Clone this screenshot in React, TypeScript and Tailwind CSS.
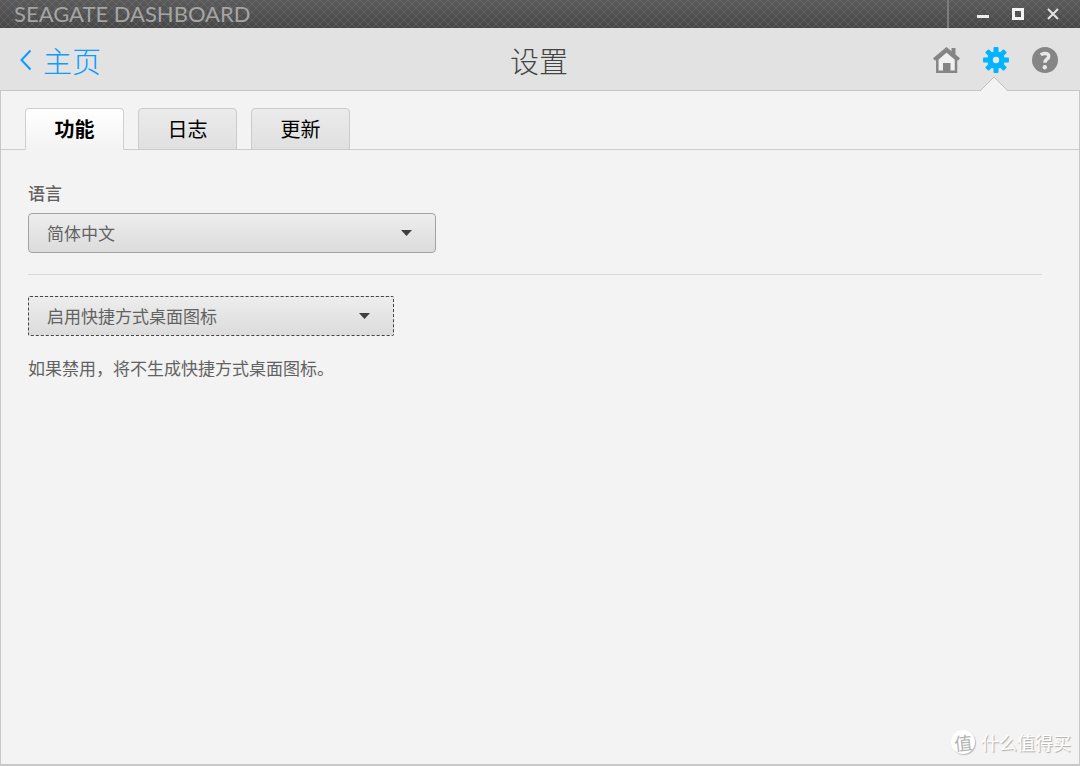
import React, { useState } from "react";

const tabs = ["功能", "日志", "更新"];

const HomeIcon = () => (
  <svg width="27" height="26" viewBox="0 0 27 26" aria-hidden="true">
    <path d="M18.500 1h4v8h-4z" fill="#858585" />
    <path
      d="M4.300 12v12.700h18.700V12L13.500 4z"
      fill="#f0f0f0"
      stroke="#858585"
      strokeWidth="2.500"
    />
    <path d="M10 16h7.500v9H10z" fill="#858585" />
    <path
      d="M1 12.500L13.500 2 26 12.500"
      fill="none"
      stroke="#858585"
      strokeWidth="3"
    />
  </svg>
);

const GearIcon = () => (
  <svg width="26" height="26" viewBox="0 0 26 26" aria-hidden="true">
    <g fill="#00b4ff">
      {[0, 45, 90, 135].map((angle) => (
        <rect
          key={angle}
          x="10.500"
          y="0"
          width="5"
          height="26"
          rx="1"
          transform={`rotate(${angle} 13 13)`}
        />
      ))}
      <circle cx="13" cy="13" r="8.800" />
    </g>
    <circle cx="13" cy="13" r="3.200" fill="#e8e8e8" />
  </svg>
);

const HelpIcon = () => (
  <svg width="26" height="26" viewBox="0 0 26 26" aria-hidden="true">
    <circle cx="13" cy="13" r="13" fill="#858585" />
    <path
      d="M8.800 7.800c2.600-2 7.900-1.800 7.900 1.600 0 2.800-3.900 2.800-3.900 6.300"
      fill="none"
      stroke="#e8e8e8"
      strokeWidth="3.500"
    />
    <circle cx="12.800" cy="20.300" r="2.200" fill="#e8e8e8" />
  </svg>
);

const TitleBar = () => (
  <div className="flex h-7 items-stretch justify-between bg-[linear-gradient(45deg,transparent_44%,#ffffff18_44%,#ffffff18_56%,transparent_56%),linear-gradient(-45deg,transparent_44%,#ffffff18_44%,#ffffff18_56%,transparent_56%),linear-gradient(#5a5a5a,#474747)] bg-[size:8px_8px,8px_8px,100%_100%] pl-3.5">
    <span className="font-[Lato,sans-serif] text-[22px] leading-7 text-[#a5a5a5]">
      SEAGATE DASHBOARD
    </span>
    <div className="flex items-center gap-[23px] border-l-2 border-[#7c7c7c] pr-[21px] pl-7">
      <button type="button" aria-label="最小化">
        <svg width="12" height="12" viewBox="0 0 12 12">
          <path d="M0 7h12v3H0z" fill="#ededed" />
        </svg>
      </button>
      <button type="button" aria-label="最大化">
        <svg width="12" height="12" viewBox="0 0 12 12">
          <path
            d="M1.500 1.500h9v9h-9z"
            fill="none"
            stroke="#f3f3f3"
            strokeWidth="3"
          />
        </svg>
      </button>
      <button type="button" aria-label="关闭">
        <svg width="12" height="12" viewBox="0 0 12 12">
          <path d="M1 1l10 10M11 1L1 11" stroke="#e4e4e4" strokeWidth="2" />
        </svg>
      </button>
    </div>
  </div>
);

const Header = () => (
  <header className="grid h-[63px] grid-cols-[1fr_auto_1fr] items-center border-b border-[#c6c6c6] bg-[#e2e2e2] pt-0.5 pr-[22px] pl-5">
    <a
      href="#home"
      className="flex items-center gap-3 justify-self-start text-[29px] leading-8 font-light text-[#0c9bff]"
    >
      <svg width="11" height="22" viewBox="0 0 11 22" aria-hidden="true">
        <path
          d="M10.500 1.500L1.500 11l9 9.500"
          fill="none"
          stroke="#0c9bff"
          strokeWidth="2"
        />
      </svg>
      主页
    </a>
    <h1 className="text-[29px] leading-8 font-light text-[#444]">设置</h1>
    <nav className="flex items-center gap-[23px] justify-self-end">
      <a href="#home" aria-label="主页">
        <HomeIcon />
      </a>
      <a href="#settings" aria-label="设置" className="relative">
        <GearIcon />
        <svg
          className="absolute top-[29px] -left-1"
          width="30"
          height="16"
          viewBox="0 0 30 16"
          aria-hidden="true"
        >
          <path d="M0 16L15 1l15 15z" fill="#f3f3f3" />
          <path d="M1 15L15 1l14 14" fill="none" stroke="#c0c0c0" />
        </svg>
      </a>
      <a href="#help" aria-label="帮助">
        <HelpIcon />
      </a>
    </nav>
  </header>
);

type DropdownProps = {
  id: string;
  label?: string;
  options: string[];
  className: string;
};

const Dropdown = ({ id, label, options, className }: DropdownProps) => (
  <div className="relative w-fit max-w-full">
    <select
      id={id}
      aria-label={label}
      className={`h-10 max-w-full appearance-none border bg-linear-to-b from-[#ededed] to-[#dcdcdc] pr-12 pl-[18px] text-[17px] text-[#626262] outline-none ${className}`}
    >
      {options.map((option) => (
        <option key={option}>{option}</option>
      ))}
    </select>
    <svg
      className="pointer-events-none absolute top-[17px] right-6"
      width="11"
      height="6"
      viewBox="0 0 11 6"
      aria-hidden="true"
    >
      <path d="M0 0h11L5.500 6z" fill="#3f3f3f" />
    </svg>
  </div>
);

const App = () => {
  const [active, setActive] = useState(0);

  return (
    <div className="flex min-h-screen flex-col bg-[#f3f3f3] font-['Noto_Sans_CJK_SC',sans-serif]">
      <TitleBar />
      <Header />

      <main className="flex flex-1 flex-col border-x border-b-2 border-[#c8c8c8]">
        <div
          role="tablist"
          className="flex gap-3.5 border-b border-[#cbcbcb] pt-[17px] pl-6"
        >
          {tabs.map((tab, index) => (
            <button
              key={tab}
              type="button"
              role="tab"
              aria-selected={index === active}
              onClick={() => setActive(index)}
              className={`-mb-px h-[42px] w-[99px] rounded-t border text-[20px] leading-7 text-black ${
                index === active
                  ? "border-[#cfcfcf] border-b-[#f3f3f3] bg-linear-to-b from-white to-[#f3f3f3] font-bold"
                  : "border-[#cbcbcb] bg-linear-to-b from-[#ebebeb] to-[#e0e0e0]"
              }`}
            >
              {tab}
            </button>
          ))}
        </div>

        <section className="flex-1 pt-[31px] pr-[37px] pl-[27px] text-[17px] leading-6 text-[#626262]">
          <label htmlFor="language" className="block font-medium">
            语言
          </label>
          <div className="mt-2 border-b border-[#dadada] pb-[21px]">
            <Dropdown
              id="language"
              options={["简体中文", "English"]}
              className="w-[408px] rounded border-[#a3a3a3]"
            />
          </div>
          <div className="mt-[21px]">
            <Dropdown
              id="shortcut"
              label="快捷方式桌面图标"
              options={["启用快捷方式桌面图标", "禁用快捷方式桌面图标"]}
              className="w-[366px] rounded-xs border-dashed border-[#444]"
            />
          </div>
          <p className="mt-5">如果禁用，将不生成快捷方式桌面图标。</p>
        </section>

        <footer className="flex items-center justify-end gap-1.5 pr-2 pb-2.5">
          <span className="flex size-6 items-center justify-center rounded-full bg-white text-[18px] leading-6 text-[#b4b4b4] shadow-[1px_1px_1px_#bbbbbb]">
            <span className="-rotate-6">值</span>
          </span>
          <span className="text-[18px] leading-6 text-white [text-shadow:1px_1px_1px_#aaaaaa]">
            什么值得买
          </span>
        </footer>
      </main>
    </div>
  );
};

export default App;
